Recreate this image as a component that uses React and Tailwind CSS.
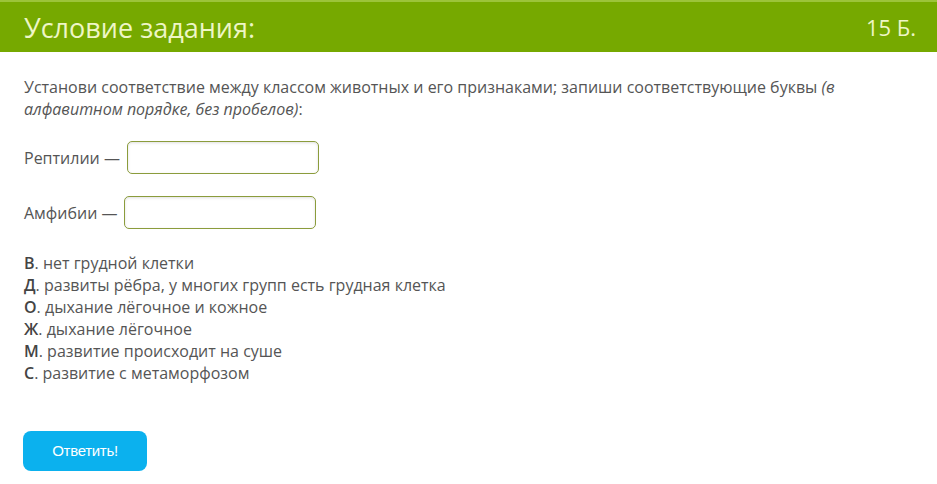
import React from "react";

const options = [
  ["В", "нет грудной клетки"],
  ["Д", "развиты рёбра, у многих групп есть грудная клетка"],
  ["О", "дыхание лёгочное и кожное"],
  ["Ж", "дыхание лёгочное"],
  ["М", "развитие происходит на суше"],
  ["С", "развитие с метаморфозом"],
];

export default function App() {
  return (
    <div className="w-[937px] h-[484px] bg-white overflow-hidden font-['Open_Sans',sans-serif] text-[#555]">
      <div className="h-[52px] bg-[#76a900] border-t-2 border-[#9cc43a] flex items-center justify-between pl-[24px] pr-[21px]">
        <h1 className="text-[27px] text-[#eef6c6] leading-none">Условие задания:</h1>
        <span className="text-[22px] text-[#eef6c6] leading-none">15 Б.</span>
      </div>

      <div className="px-[24px] pt-[24px]">
        <p className="text-[16px] leading-[22px] pr-[60px]">
          Установи соответствие между классом животных и его признаками; запиши соответствующие буквы{" "}
          <i>(в алфавитном порядке, без пробелов)</i>:
        </p>

        <div className="mt-[21px] flex items-center gap-[7px] text-[16px]">
          <span>Рептилии —</span>
          <input className="w-[192px] h-[33px] border border-[#8b9c3c] rounded-[5px] shadow-[inset_0_1px_3px_rgba(0,0,0,0.12)] outline-none" />
        </div>

        <div className="mt-[22px] flex items-center gap-[7px] text-[16px]">
          <span>Амфибии —</span>
          <input className="w-[192px] h-[33px] border border-[#8b9c3c] rounded-[5px] shadow-[inset_0_1px_3px_rgba(0,0,0,0.12)] outline-none" />
        </div>

        <ul className="mt-[23px] text-[16px] leading-[22px]">
          {options.map(([k, v]) => (
            <li key={k}>
              <b className="font-semibold text-[#444]">{k}</b>. {v}
            </li>
          ))}
        </ul>

        <button className="mt-[47px] -ml-[1px] w-[124px] h-[40px] rounded-[8px] bg-[#0bb1ee] text-white text-[15px] tracking-[-0.3px] font-['Liberation_Sans',sans-serif]">
          Ответить!
        </button>
      </div>
    </div>
  );
}
